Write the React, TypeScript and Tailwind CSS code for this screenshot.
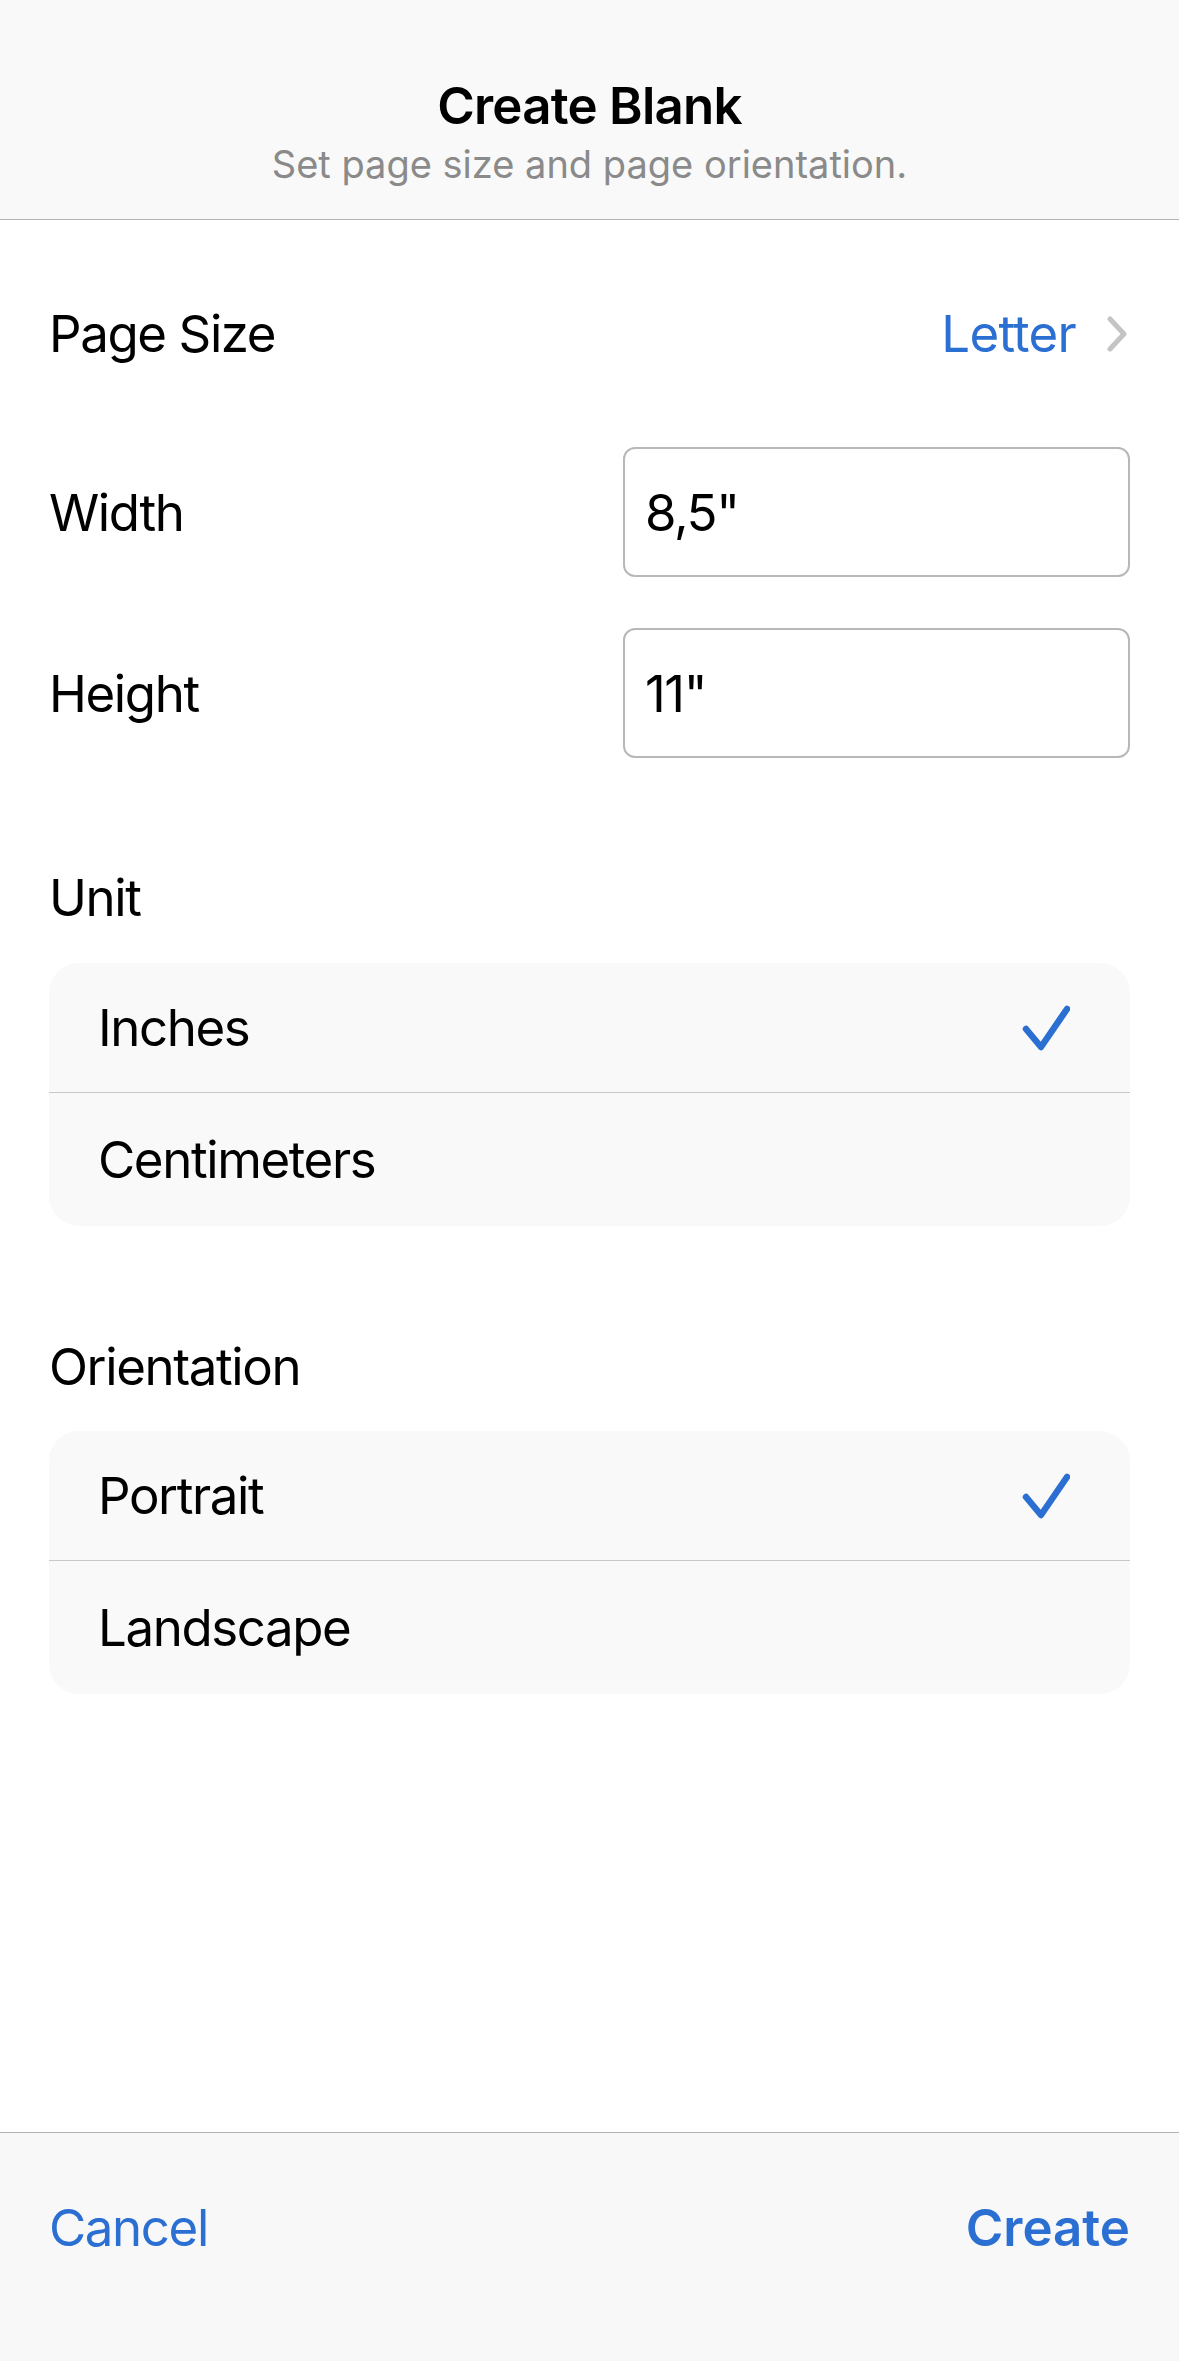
import React from "react";

const BLUE = "text-[#2a6fd1]";
const BODY = "text-[51px] leading-[51px] tracking-[-1.4px]";

function Check() {
  return (
    <svg width="48" height="48" viewBox="0 0 48 48" fill="none">
      <path
        d="M4 25 L19 43 L45 5"
        stroke="#2a6fd1"
        strokeWidth="6.5"
        strokeLinecap="round"
        strokeLinejoin="round"
      />
    </svg>
  );
}

function Chevron() {
  return (
    <svg width="22" height="36" viewBox="0 0 22 36" fill="none">
      <path
        d="M4 3 L18 18 L4 33"
        stroke="#c4c4c6"
        strokeWidth="5"
        strokeLinecap="round"
        strokeLinejoin="round"
      />
    </svg>
  );
}

type Option = { label: string; checked?: boolean };

function OptionGroup({ options }: { options: Option[] }) {
  return (
    <div className="rounded-[30px] bg-[#f9f9f9] overflow-hidden">
      {options.map((o, i) => (
        <div key={o.label}>
          {i > 0 && <div className="h-px bg-[#c8c8c8]" />}
          <div
            className={
              "flex items-center justify-between pl-[49px] pr-[60px] " +
              (i === 0 ? "h-[129px]" : "h-[133px]")
            }
          >
            <span className={BODY + " text-black"}>{o.label}</span>
            {o.checked && <Check />}
          </div>
        </div>
      ))}
    </div>
  );
}

function Field({ label, value }: { label: string; value: string }) {
  return (
    <div className="flex items-center justify-between h-[130px]">
      <span className={BODY + " text-black"}>{label}</span>
      <div className="w-[507px] h-full rounded-[12px] border-2 border-[#b8b8b8] flex items-center pl-[20px]">
        <span className={BODY + " text-black"}>{value}</span>
      </div>
    </div>
  );
}

export default function App() {
  return (
    <div className="w-[1179px] h-[2361px] flex flex-col bg-white font-['Inter',sans-serif] overflow-hidden">
      {/* header */}
      <div className="h-[220px] shrink-0 bg-[#f9f9f9] border-b border-[#b2b2b2] flex flex-col items-center">
        <div className="mt-[80px] text-[51px] leading-[51px] tracking-[-0.75px] font-semibold text-black">
          Create Blank
        </div>
        <div className="mt-[14px] text-[38px] leading-[38px] text-[#8a8a8a]">
          Set page size and page orientation.
        </div>
      </div>

      {/* body */}
      <div className="px-[49px] flex flex-col">
        <div className="h-[227px] flex items-center justify-between">
          <span className={BODY + " text-black"}>Page Size</span>
          <div className="flex items-center gap-[30px] pr-[2px]">
            <span className={"text-[51px] leading-[51px] tracking-[-0.75px] " + BLUE}>Letter</span>
            <Chevron />
          </div>
        </div>

        <Field label="Width" value={'8,5"'} />
        <div className="h-[51px]" />
        <Field label="Height" value={'11"'} />

        <div className={"mt-[114px] text-black " + BODY}>Unit</div>
        <div className="mt-[40px]">
          <OptionGroup options={[{ label: "Inches", checked: true }, { label: "Centimeters" }]} />
        </div>

        <div className={"mt-[115px] text-black " + BODY}>Orientation</div>
        <div className="mt-[39px]">
          <OptionGroup options={[{ label: "Portrait", checked: true }, { label: "Landscape" }]} />
        </div>
      </div>

      {/* footer */}
      <div className="mt-auto h-[229px] shrink-0 bg-[#f8f8f8] border-t border-[#b2b2b2] flex justify-between px-[49px] pt-[69px]">
        <span className={BODY + " " + BLUE}>Cancel</span>
        <span className={"text-[51px] leading-[51px] font-semibold " + BLUE}>Create</span>
      </div>
    </div>
  );
}
